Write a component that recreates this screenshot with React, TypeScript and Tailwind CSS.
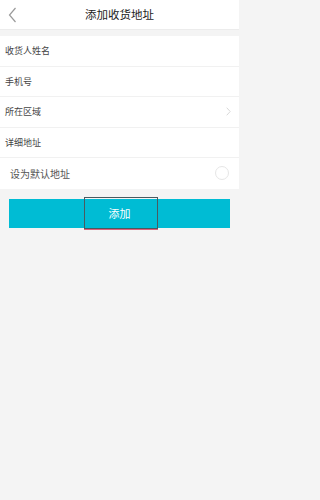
import React from 'react'

const font = { fontFamily: '"Noto Sans CJK SC", "Noto Sans", sans-serif' }

const fields = ['收货人姓名', '手机号', '所在区域', '详细地址']

export default function App() {
  return (
    <div className="w-full min-h-screen bg-[#f4f4f4]" style={font}>
      <div className="w-[239px]">
        {/* header */}
        <header className="relative h-[30px] bg-white flex items-center justify-center border-b border-[#ececec]">
          <svg className="absolute left-[8px] top-[7px]" width="9" height="16" viewBox="0 0 9 16" fill="none">
            <path d="M7.5 1 L1.5 8 L7.5 15" stroke="#9a9a9a" strokeWidth="1.2" />
          </svg>
          <span className="text-[11.5px] text-[#222]">添加收货地址</span>
        </header>

        {/* form */}
        <div className="mt-[6px] bg-white">
          {fields.map((f) => (
            <div key={f} className="h-[30.5px] flex items-center justify-between pl-[5px] pr-[8px] border-b border-[#f1f1f1]">
              <span className="text-[9px] text-[#444]">{f}</span>
              {f === '所在区域' && (
                <svg width="5" height="9" viewBox="0 0 5 9" fill="none">
                  <path d="M0.7 0.7 L4.2 4.5 L0.7 8.3" stroke="#d8d8d8" strokeWidth="1" />
                </svg>
              )}
            </div>
          ))}
          <div className="h-[30.5px] flex items-center justify-between pl-[10px] pr-[10px]">
            <span className="text-[10px] text-[#555]">设为默认地址</span>
            <span className="w-[14px] h-[14px] rounded-full border border-[#e6e6e6]" />
          </div>
        </div>

        {/* submit */}
        <div className="px-[9px] pt-[10px]">
          <button className="relative w-full h-[29px] bg-[#00bcd4] flex items-center justify-center text-white text-[11px]">
            <span className="absolute left-[75px] top-[-2px] w-[74px] h-[32px] border border-[#4a5a60] shadow-[0_1px_0_#e0607a]" />
            添加
          </button>
        </div>
      </div>
    </div>
  )
}
